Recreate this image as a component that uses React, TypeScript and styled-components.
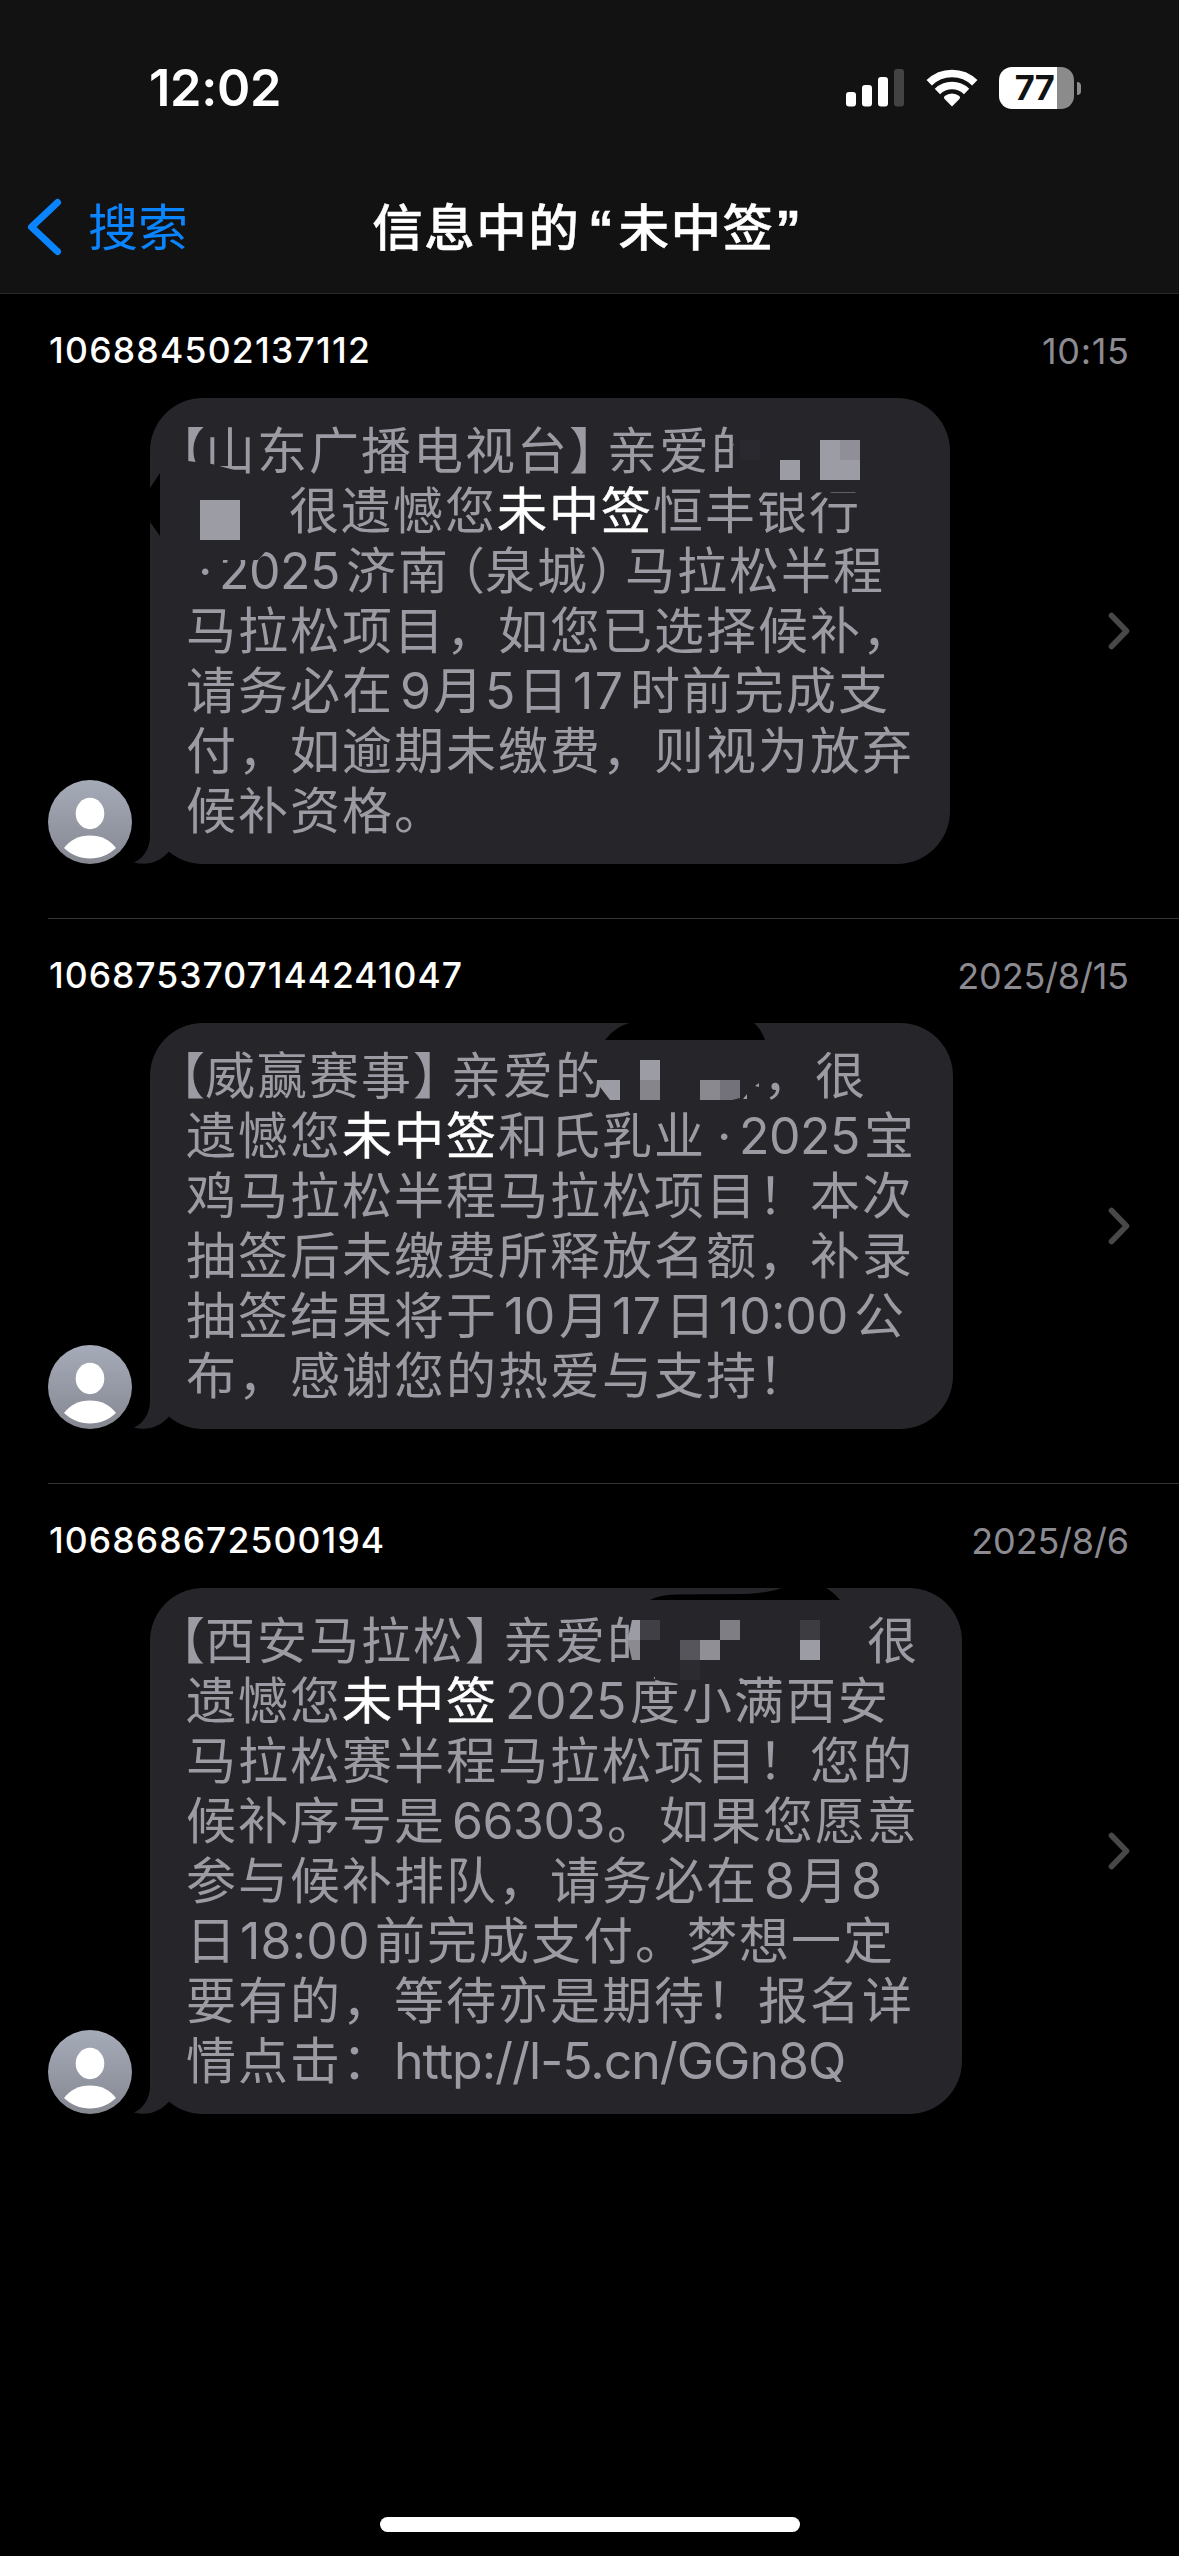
import React from "react";
import styled, { createGlobalStyle } from "styled-components";

const BUBBLE = "#26252a";
const INK = "#9c9ba3";

const GlobalStyle = createGlobalStyle`
  *, *::before, *::after { box-sizing: border-box; }
  body {
    margin: 0;
    background: #000;
    font-family: Inter, "Noto Sans CJK SC", sans-serif;
    -webkit-font-smoothing: antialiased;
  }
`;

const Screen = styled.div`
  width: 1179px;
  height: 2556px;
  display: flex;
  flex-direction: column;
  background: #000;
  overflow: hidden;
`;

const Header = styled.header`
  height: 294px;
  flex: none;
  background: #121212;
  border-bottom: 1px solid #29292a;
`;

const StatusBar = styled.div`
  height: 176px;
  padding: 0 98px 0 149px;
  display: flex;
  align-items: center;
  justify-content: space-between;
`;

const Clock = styled.div`
  font-size: 50.5px;
  font-weight: 600;
  letter-spacing: -0.3px;
  line-height: 60px;
  color: #fff;
`;

const StatusIcons = styled.div`
  display: flex;
  align-items: center;
  gap: 21px;
`;

const Battery = styled.div`
  display: flex;
  align-items: center;
  gap: 3px;
`;

const BatteryBody = styled.div`
  width: 75px;
  height: 42px;
  border-radius: 13px;
  background: linear-gradient(90deg, #fff 58px, #8b8b8b 58px);
  color: #121212;
  font-size: 34.5px;
  font-weight: 700;
  line-height: 42px;
  letter-spacing: -0.6px;
  text-align: center;
  padding-right: 4px;
`;

const BatteryCap = styled.div`
  width: 4px;
  height: 13px;
  border-radius: 0 4px 4px 0;
  background: #8b8b8b;
`;

const NavBar = styled.nav`
  height: 117px;
  padding: 0 27px 16px;
  display: grid;
  grid-template-columns: 1fr auto 1fr;
  align-items: center;
`;

const BackButton = styled.div`
  display: flex;
  align-items: center;
  gap: 25px;
  color: #0b84ff;
  font-size: 50px;
  line-height: 60px;
`;

const BackLabel = styled.span`
  padding-top: 2px;
`;

const Title = styled.h1`
  margin: 0;
  padding-right: 6px;
  color: #fff;
  font-family: "Noto Sans CJK SC", sans-serif;
  font-size: 50.5px;
  font-weight: 500;
  letter-spacing: 1.5px;
  line-height: 60px;
  -webkit-text-stroke: 0.5px #fff;
`;

const Quote = styled.span<{ $before?: number; $after?: number }>`
  font-family: "Liberation Sans", sans-serif;
  font-weight: 700;
  letter-spacing: 0;
  margin-left: ${(p) => p.$before ?? 0}px;
  margin-right: ${(p) => p.$after ?? 0}px;
`;

const Result = styled.article<{ $height: number }>`
  height: ${(p) => p.$height}px;
  flex: none;
  margin-left: 48px;
  border-bottom: 1px solid #343436;
  &:last-of-type { border-bottom: 0; }
`;

const ResultHead = styled.div`
  height: 104px;
  padding: 35px 50px 0 1px;
  display: flex;
  justify-content: space-between;
  line-height: 44px;
`;

const Sender = styled.div<{ $spacing: number }>`
  color: #fff;
  font-size: 35.5px;
  font-weight: 500;
  letter-spacing: ${(p) => p.$spacing}px;
`;

const Stamp = styled.time<{ $spacing: number }>`
  color: #8b8b91;
  font-size: 36px;
  letter-spacing: ${(p) => p.$spacing}px;
  margin-right: ${(p) => -p.$spacing}px;
`;

const ResultBody = styled.div`
  display: flex;
  align-items: flex-end;
  padding-right: 49px;
`;

const Bubble = styled.div<{ $width: number }>`
  position: relative;
  width: ${(p) => p.$width}px;
  margin-left: 18px;
  padding: 23px 0 23px 36px;
  border-radius: 53px;
  background: ${BUBBLE};
`;

const Tail = styled.svg`
  position: absolute;
  left: -17px;
  bottom: 0;
`;

const Redaction = styled.svg`
  position: absolute;
  left: 0;
  top: 0;
`;

const Line = styled.div<{ $indent?: number }>`
  height: 60px;
  margin-left: ${(p) => p.$indent ?? 0}px;
  display: flex;
  white-space: pre;
  color: ${INK};
  font-family: Inter, "Noto Sans CJK SC", sans-serif;
  font-size: 50px;
  font-weight: 400;
  letter-spacing: 2px;
  line-height: 60px;
`;

const Han = styled.span`
  flex: none;
`;

const Match = styled.span`
  flex: none;
  color: #fff;
  -webkit-text-stroke: 0.5px #fff;
`;

const Bracket = styled.span<{ $width: number; $open?: boolean }>`
  flex: none;
  width: ${(p) => p.$width}px;
  display: flex;
  justify-content: ${(p) => (p.$open ? "flex-end" : "flex-start")};
  letter-spacing: 0;
  font-feature-settings: "halt" 1;
`;

const Latin = styled.span<{ $width: number; $pad?: number; $spacing?: number }>`
  flex: none;
  width: ${(p) => p.$width}px;
  padding-left: ${(p) => p.$pad ?? 0}px;
  letter-spacing: ${(p) => p.$spacing ?? -0.5}px;
`;

const Disclosure = styled.div`
  flex: 1;
  align-self: center;
  display: flex;
  justify-content: flex-end;
`;

const HomeArea = styled.footer`
  margin-top: auto;
  height: 39px;
  flex: none;
  display: flex;
  justify-content: center;
`;

const HomeIndicator = styled.div`
  width: 420px;
  height: 15px;
  border-radius: 8px;
  background: #fff;
`;

const SignalIcon = () => (
  <svg width="59" height="38" viewBox="0 0 59 38">
    <rect x="0" y="23" width="10" height="14.5" rx="3" fill="#fff" />
    <rect x="16" y="16" width="10" height="21.5" rx="3" fill="#fff" />
    <rect x="32" y="8" width="10" height="29.5" rx="3" fill="#fff" />
    <rect x="48" y="0" width="10" height="37.5" rx="3" fill="#434343" />
  </svg>
);

const WifiIcon = () => (
  <svg width="52" height="38" viewBox="0 0 52 38">
    <g fill="none" stroke="#fff" strokeWidth="7.6">
      <path d="M3.2 13.8A32.5 32.5 0 0 1 48.8 13.8" />
      <path d="M11.4 22.4A21 21 0 0 1 40.6 22.4" />
    </g>
    <path d="M26 37.5L18.6 30a2 2 0 0 1 .1-2.9 11.2 11.2 0 0 1 14.6 0 2 2 0 0 1 .1 2.9z" fill="#fff" />
  </svg>
);

const BackIcon = () => (
  <svg width="36" height="58" viewBox="0 0 36 58">
    <path d="M30.500 4.500L4.500 29L30.500 53.500" fill="none" stroke="#0b84ff" strokeWidth="7" strokeLinecap="round" strokeLinejoin="round" />
  </svg>
);

const ChevronIcon = () => (
  <svg width="22" height="38" viewBox="0 0 22 38">
    <path d="M3.500 3.500L18.500 19L3.500 34.500" fill="none" stroke="#48484b" strokeWidth="5.600" strokeLinecap="round" strokeLinejoin="round" />
  </svg>
);

const Avatar = ({ id }: { id: string }) => (
  <svg width="84" height="84" viewBox="0 0 84 84">
    <defs>
      <linearGradient id={id} x1="0" y1="0" x2="0" y2="1">
        <stop offset="0" stopColor="#a6abb9" />
        <stop offset="1" stopColor="#858891" />
      </linearGradient>
    </defs>
    <circle cx="42" cy="42" r="42" fill={`url(#${id})`} />
    <ellipse cx="42" cy="33.500" rx="14.300" ry="15.700" fill="#fff" />
    <path d="M16 68C22 60 31 55.500 42 55.500S62 60 68 68C61 74.500 52 78.500 42 78.500S23 74.500 16 68Z" fill="#fff" />
  </svg>
);

const BubbleTail = () => (
  <Tail width="54" height="70" viewBox="0 0 54 70">
    <path d="M17 0V42C17 54 11 64 1 68.500C14 72 27 68 36 57.500L40 40Z" fill={BUBBLE} />
  </Tail>
);

type Tile = [number, number, number, number, string];

const Tiles = ({ tiles }: { tiles: Tile[] }) => (
  <g shapeRendering="crispEdges">
    {tiles.map(([x, y, w, h, fill], i) => (
      <rect key={i} x={x} y={y} width={w} height={h} fill={fill} />
    ))}
  </g>
);

interface ResultProps {
  id: string;
  height: number;
  sender: string;
  senderSpacing: number;
  stamp: string;
  stampSpacing: number;
  bubbleWidth: number;
  children: React.ReactNode;
}

const SearchResult = (p: ResultProps) => (
  <Result $height={p.height}>
    <ResultHead>
      <Sender $spacing={p.senderSpacing}>{p.sender}</Sender>
      <Stamp $spacing={p.stampSpacing}>{p.stamp}</Stamp>
    </ResultHead>
    <ResultBody>
      <Avatar id={p.id} />
      <Bubble $width={p.bubbleWidth}>
        <BubbleTail />
        {p.children}
      </Bubble>
      <Disclosure>
        <ChevronIcon />
      </Disclosure>
    </ResultBody>
  </Result>
);

export default function App() {
  return (
    <Screen>
      <GlobalStyle />
      <Header>
        <StatusBar>
          <Clock>12:02</Clock>
          <StatusIcons>
            <SignalIcon />
            <WifiIcon />
            <Battery>
              <BatteryBody>77</BatteryBody>
              <BatteryCap />
            </Battery>
          </StatusIcons>
        </StatusBar>
        <NavBar>
          <BackButton>
            <BackIcon />
            <BackLabel>搜索</BackLabel>
          </BackButton>
          <Title>
            信息中的<Quote $before={8} $after={5}>“</Quote>未中签<Quote $before={1}>”</Quote>
          </Title>
        </NavBar>
      </Header>

      <SearchResult id="av1" height={625} sender="106884502137112" senderSpacing={1.25} stamp="10:15" stampSpacing={0.7} bubbleWidth={800}>
        <Line>
          <Bracket $width={19} $open>【</Bracket>
          <Han>山东广播电视台</Han>
          <Bracket $width={38}>】</Bracket>
          <Han>亲爱的</Han>
        </Line>
        <Line $indent={103}>
          <Han>很遗憾您</Han>
          <Match>未中签</Match>
          <Han>恒丰银行</Han>
        </Line>
        <Line>
          <Latin $width={33} $pad={12}>·</Latin>
          <Latin $width={127}>2025</Latin>
          <Han>济南</Han>
          <Bracket $width={35} $open>（</Bracket>
          <Han>泉城</Han>
          <Bracket $width={36}>）</Bracket>
          <Han>马拉松半程</Han>
        </Line>
        <Line><Han>马拉松项目，如您已选择候补，</Han></Line>
        <Line>
          <Han>请务必在</Han>
          <Latin $width={39} $pad={6}>9</Latin>
          <Han>月</Han>
          <Latin $width={33}>5</Latin>
          <Han>日</Han>
          <Latin $width={60} $pad={3} $spacing={1.5}>17</Latin>
          <Han>时前完成支</Han>
        </Line>
        <Line><Han>付，如逾期未缴费，则视为放弃</Han></Line>
        <Line><Han>候补资格。</Han></Line>
        <Redaction width="800" height="466" viewBox="150 398 800 466">
          <path d="M150 488L160 473V536L150 522Z" fill="#000" />
          <g fill={BUBBLE}>
            <path d="M180 460L212 464L238 471V482H180Z" />
            <path d="M734 425H770V482H734Z" />
            <path d="M750 482H870V492.500H750Z" />
            <path d="M215 540H276L258 560H215Z" />
          </g>
          <Tiles
            tiles={[
              [740, 440, 20, 20, "#2a292f"],
              [780, 460, 20, 20, "#9c9ca4"],
              [820, 440, 40, 40, "#9c9ca4"],
              [840, 440, 20, 20, "#908f97"],
              [200, 500, 40, 40, "#9c9ca4"],
            ]}
          />
        </Redaction>
      </SearchResult>

      <SearchResult id="av2" height={565} sender="1068753707144241047" senderSpacing={1} stamp="2025/8/15" stampSpacing={-0.2} bubbleWidth={803}>
        <Line>
          <Bracket $width={19} $open>【</Bracket>
          <Han>威赢赛事</Han>
          <Bracket $width={38}>】</Bracket>
          <Han>亲爱的</Han>
          <Latin $width={156}> </Latin>
          <Han>，很</Han>
        </Line>
        <Line>
          <Han>遗憾您</Han>
          <Match>未中签</Match>
          <Han>和氏乳业</Han>
          <Latin $width={33} $pad={11}>·</Latin>
          <Latin $width={125}>2025</Latin>
          <Han>宝</Han>
        </Line>
        <Line><Han>鸡马拉松半程马拉松项目！本次</Han></Line>
        <Line><Han>抽签后未缴费所释放名额，补录</Han></Line>
        <Line>
          <Han>抽签结果将于</Han>
          <Latin $width={61} $pad={6}>10</Latin>
          <Han>月</Han>
          <Latin $width={54} $pad={1} $spacing={0.5}>17</Latin>
          <Han>日</Han>
          <Latin $width={137} $pad={2} $spacing={0}>10:00</Latin>
          <Han>公</Han>
        </Line>
        <Line><Han>布，感谢您的热爱与支持！</Han></Line>
        <Redaction width="803" height="406" viewBox="150 1023 803 406">
          <path d="M605 1040C613 1030 622 1024 634 1022H753C759 1027 762 1032 765 1040Z" fill="#000" />
          <path d="M597 1045H612V1080H597Z" fill={BUBBLE} />
          <path d="M600 1080H620V1100H610L600 1087Z" fill="#9c9ca4" />
          <Tiles
            tiles={[
              [640, 1060, 20, 20, "#9c9ca4"],
              [640, 1080, 20, 20, "#86858c"],
              [700, 1080, 20, 20, "#8a8990"],
            ]}
          />
          <path d="M720 1080H740V1098L732 1100H720Z" fill="#73727a" />
          <path d="M743 1099L747 1094V1099ZM755 1086L759 1083V1087Z" fill={INK} />
        </Redaction>
      </SearchResult>

      <SearchResult id="av3" height={700} sender="106868672500194" senderSpacing={1.1} stamp="2025/8/6" stampSpacing={-0.2} bubbleWidth={812}>
        <Line>
          <Bracket $width={19} $open>【</Bracket>
          <Han>西安马拉松</Han>
          <Bracket $width={38}>】</Bracket>
          <Han>亲爱的</Han>
          <Latin $width={208}> </Latin>
          <Han>很</Han>
        </Line>
        <Line>
          <Han>遗憾您</Han>
          <Match>未中签</Match>
          <Latin $width={132} $pad={7}>2025</Latin>
          <Han>度小满西安</Han>
        </Line>
        <Line><Han>马拉松赛半程马拉松项目！您的</Han></Line>
        <Line>
          <Han>候补序号是</Han>
          <Latin $width={161} $pad={6}>66303</Latin>
          <Han>。如果您愿意</Han>
        </Line>
        <Line>
          <Han>参与候补排队，请务必在</Han>
          <Latin $width={40} $pad={6}>8</Latin>
          <Han>月</Han>
          <Latin $width={36} $pad={1}>8</Latin>
        </Line>
        <Line>
          <Han>日</Han>
          <Latin $width={137} $pad={2} $spacing={0.2}>18:00</Latin>
          <Han>前完成支付。梦想一定</Han>
        </Line>
        <Line><Han>要有的，等待亦是期待！报名详</Han></Line>
        <Line>
          <Han>情点击：</Han>
          <Latin $width={460} $spacing={-1}>http://l-5.cn/GGn8Q</Latin>
        </Line>
        <Redaction width="812" height="526" viewBox="150 1588 812 526">
          <path d="M650 1600C658 1596 664 1595 676 1594.500L745 1594C762 1593.500 773 1591 785 1587H824C830 1590 835 1594 840 1600Z" fill="#000" />
          <g fill={BUBBLE}>
            <path d="M629 1612H668V1664H629Z" />
            <path d="M655 1670H735V1684H680L655 1680Z" />
          </g>
          <path d="M632 1620H640V1640H627.500Z" fill="#9c9ca4" />
          <path d="M627.500 1640H640V1660H632Z" fill="#8b8a91" />
          <Tiles
            tiles={[
              [640, 1620, 20, 20, "#403f45"],
              [720, 1620, 20, 20, "#7f7e85"],
              [680, 1640, 20, 20, "#56555b"],
              [700, 1640, 20, 20, "#908f96"],
              [680, 1660, 20, 20, "#2c2b30"],
              [800, 1620, 20, 20, "#3d3c41"],
              [800, 1640, 20, 20, "#9c9ca4"],
              [740, 1680, 40, 4, "#9c9ca4"],
            ]}
          />
        </Redaction>
      </SearchResult>

      <HomeArea>
        <HomeIndicator />
      </HomeArea>
    </Screen>
  );
}
